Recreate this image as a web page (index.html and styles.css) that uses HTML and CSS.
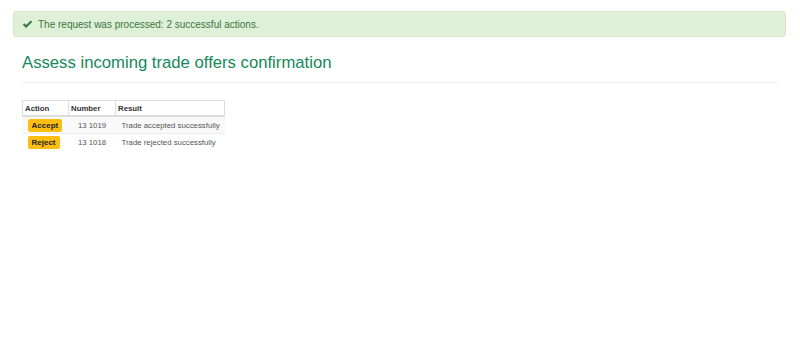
FILE: index.html
```html
<!DOCTYPE html>
<html>
<head>
<meta charset="utf-8">
<link rel="stylesheet" href="styles.css">
</head>
<body>
<div class="page">
  <div class="alert">
    <svg class="check" viewBox="0 0 12 10" width="11" height="9"><path d="M0.8 5.2 L2.4 3.6 L4.4 5.6 L9.6 0.6 L11.2 2.2 L4.4 8.8 Z" fill="#3c763d"/></svg>
    <span>The request was processed: 2 successful actions.</span>
  </div>
  <div class="content">
    <h1 class="title">Assess incoming trade offers confirmation</h1>
    <table class="results">
      <thead>
        <tr><th class="c-action">Action</th><th class="c-num">Number</th><th class="c-res">Result</th></tr>
      </thead>
      <tbody>
        <tr class="odd"><td><span class="badge">Accept</span></td><td class="num">13 1019</td><td class="res">Trade accepted successfully</td></tr>
        <tr><td><span class="badge">Reject</span></td><td class="num">13 1018</td><td class="res">Trade rejected successfully</td></tr>
      </tbody>
    </table>
  </div>
</div>
</body>
</html>
```
FILE: styles.css
```css
html, body { margin: 0; padding: 0; background: #fff; }
body { font-family: "Liberation Sans", Arial, sans-serif; color: #333; }
.page { padding: 11px 14px 0 13px; }
.alert {
  display: flex; align-items: center; gap: 5px;
  height: 24px; padding: 0 8px;
  background: #dff0d8; border: 1px solid #d6e9c6; border-radius: 3px;
  color: #3c763d; font-size: 10px;
}
.check { display: block; }
.content { padding: 0 8px 0 9px; }
.title {
  margin: 16px 0 0; padding-bottom: 10px;
  font-size: 16.7px; font-weight: normal; color: #16885a;
  border-bottom: 1px solid #eee; line-height: 19px;
}
.results {
  margin-top: 17px; border-collapse: collapse; font-size: 7.8px;
  table-layout: fixed; width: 203px; white-space: nowrap;
}
.results th {
  text-align: left; font-weight: bold; color: #333;
  height: 14px; padding: 0 2px;
  border-top: 1px solid #ddd; border-left: 1px solid #ddd; border-right: 1px solid #ddd;
  border-bottom: 2px solid #ddd;
}
.c-action { width: 41px; }
.c-num { width: 42px; }
.results td { height: 16px; padding: 0 5px; color: #555; border-top: 1px solid #eee; }
.results td.res { padding-left: 6px; }
.results tr.odd td { background: #f9f9f9; }
.results td.num { text-align: center; }
.badge {
  display: inline-block; background: #fcbe11; color: #222; font-weight: bold;
  padding: 2px 4px; border-radius: 2px; line-height: 9px; font-size: 8px;
}
```
